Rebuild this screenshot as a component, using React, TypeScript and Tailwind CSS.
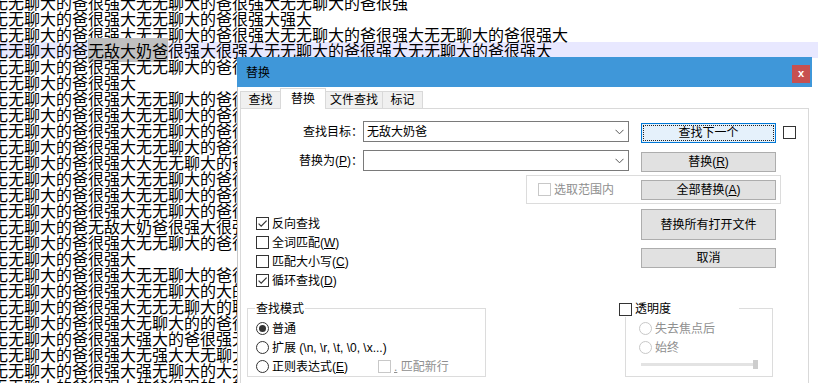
import React from "react";

const TOP_LINES = [
  "无无聊大的爸很强大无无聊大的爸很强大无无聊大的爸很强",
  "无无聊大的爸很强大无无聊大的爸很强大强大",
  "无无聊大的爸很强大无无聊大的爸很强大无无聊大的爸很强大无无聊大的爸很强大",
];

const REST_LINES = [
  "无无聊大的爸很强大无无聊大的爸很强大",
  "无无聊大的爸很强大",
  "无无聊大的爸很强大无无聊大的爸很强大",
  "无无聊大的爸很强大无无聊大的爸很强大",
  "无无聊大的爸很强大无无聊大的爸很强大",
  "无无聊大的爸很强大无无聊大的爸很强大",
  "无无聊大的爸很强大大无无聊大的爸很强大",
  "无无聊大的爸很强大无无聊大的爸很强大",
  "无无聊大的爸很强大无无聊大的爸很强大",
  "无无聊大的爸很强大无无聊大的爸很强大",
  "无无聊大的爸无敌大奶爸很强大很强大",
  "无无聊大的爸很强大无无聊大的爸很强大",
  "无无聊大的爸很强大",
  "无无聊大的爸很强大无无聊大的爸很强大",
  "无无聊大的爸很强大无无聊大的大的爸很强大",
  "无无聊大的爸很强大无无无聊大的聊大的爸很强大",
  "无无聊大的爸很强大无聊大的的爸很强大",
  "无无聊大的爸很强大强大的爸很强无无聊大",
  "无无聊大的爸很强大无强大大无聊大的爸很强大",
  "无无聊大的爸很强大强无聊大的大无无聊大",
  "无无聊大的爸很强大的爸很强的大的爸很强大",
];

function CheckBox({ checked = false, disabled = false }: { checked?: boolean; disabled?: boolean }) {
  return (
    <span
      className={
        disabled
          ? "flex h-[13px] w-[13px] shrink-0 items-center justify-center border border-[#c8c8c8] bg-white"
          : "flex h-[13px] w-[13px] shrink-0 items-center justify-center border border-[#333333] bg-white"
      }
    >
      {checked && (
        <svg width="11" height="11" viewBox="0 0 11 11">
          <path d="M1.6 5.6 L4.2 8.2 L9.6 2.6" fill="none" stroke="#333333" strokeWidth="1.2" />
        </svg>
      )}
    </span>
  );
}

function Radio({ checked = false, disabled = false }: { checked?: boolean; disabled?: boolean }) {
  return (
    <span
      className={
        disabled
          ? "flex h-[13px] w-[13px] shrink-0 items-center justify-center rounded-full border border-[#c8c8c8] bg-white"
          : "flex h-[13px] w-[13px] shrink-0 items-center justify-center rounded-full border border-[#333333] bg-white"
      }
    >
      {checked && <span className="h-[7px] w-[7px] rounded-full bg-[#333333]" />}
    </span>
  );
}

function U({ c }: { c: string }) {
  return <span className="underline underline-offset-[1px]">{c}</span>;
}

function Chevron() {
  return (
    <svg width="9" height="6" viewBox="0 0 9 6" className="shrink-0">
      <path d="M0.5 0.8 L4.5 4.8 L8.5 0.8" fill="none" stroke="#555555" strokeWidth="1" />
    </svg>
  );
}

export default function App() {
  return (
    <div className="relative h-[383px] w-[818px] overflow-hidden bg-white">
      {/* editor text */}
      <div className="-mt-[6px] -ml-[8px] w-[826px] font-['Noto_Sans_CJK_SC',sans-serif] text-[16px] leading-[16px] text-black">
        {TOP_LINES.map((l, i) => (
          <div key={i} className="h-[16px] whitespace-pre">
            {l}
          </div>
        ))}
        <div className="h-[16px] whitespace-pre bg-[#e8e8ff]">
          无无聊大的爸<span className="bg-[#c0c0c0]">无敌大奶爸</span>很强大很强大无无聊大的爸很强大无无聊大的爸很强大
        </div>
        {REST_LINES.map((l, i) => (
          <div key={i} className="h-[16px] whitespace-pre">
            {l}
          </div>
        ))}
      </div>

      {/* replace dialog */}
      <div className="absolute left-[237px] top-[57px] h-[330px] w-[575px] bg-white font-['Liberation_Sans','Noto_Sans_CJK_SC',sans-serif] text-[12px] leading-[16px] text-black">
        {/* title bar */}
        <div className="flex h-[30px] items-start bg-[#3f97d9]">
          <span className="ml-[9px] mt-[8px] text-black">替换</span>
          <div className="ml-auto mr-[2px] mt-[8px] flex h-[18px] w-[18px] items-center justify-center bg-[#c75050] pb-[2px] text-[11px] font-bold leading-none text-white">
            x
          </div>
        </div>

        <div className="h-[300px] border-l border-[#c8c8c8] pt-[1px]">
          {/* tabs */}
          <div className="ml-[2px] flex h-[20px] items-end">
            <div className="flex h-[17px] w-[41px] items-center justify-center border border-b-0 border-[#d9d9d9] bg-[#f0f0f0]">
              查找
            </div>
            <div className="relative z-10 -mb-px -ml-px flex h-[21px] w-[46px] items-center justify-center border border-b-0 border-[#d9d9d9] bg-white">
              替换
            </div>
            <div className="-ml-px flex h-[17px] w-[58px] items-center justify-center border border-b-0 border-[#d9d9d9] bg-[#f0f0f0]">
              文件查找
            </div>
            <div className="-ml-px flex h-[17px] w-[41px] items-center justify-center border border-b-0 border-[#d9d9d9] bg-[#f0f0f0]">
              标记
            </div>
          </div>

          {/* tab panel */}
          <div className="ml-[2px] h-[290px] w-[569px] border border-[#d9d9d9] bg-white">
            {/* row 1 */}
            <div className="mt-[12px] flex h-[21px] items-start">
              <div className="flex h-[21px] w-[122px] items-center justify-end">查找目标：</div>
              <div className="flex h-[21px] w-[266px] items-center justify-between border border-[#7a7a7a] bg-white pl-[3px] pr-[4px]">
                <span>无敌大奶爸</span>
                <Chevron />
              </div>
              <div className="relative ml-[12px] mt-[2px] flex h-[20px] w-[135px] items-center justify-center border border-[#0078d7] bg-[#e5f1fb]">
                <span className="absolute inset-[1px] border border-dotted border-[#222222]" />
                查找下一个
              </div>
              <div className="ml-[7px] mt-[5px]">
                <CheckBox />
              </div>
            </div>

            {/* row 2 */}
            <div className="mt-[8px] flex h-[21px] items-start">
              <div className="flex h-[21px] w-[122px] items-center justify-end">
                替换为(<U c="P" />)：
              </div>
              <div className="flex h-[21px] w-[266px] items-center justify-end border border-[#7a7a7a] bg-white pr-[4px]">
                <Chevron />
              </div>
              <div className="ml-[12px] mt-[2px] flex h-[20px] w-[135px] items-center justify-center border border-[#adadad] bg-[#e1e1e1]">
                替换(<U c="R" />)
              </div>
            </div>

            {/* row 3 */}
            <div className="ml-[285px] mt-[4px] flex h-[29px] w-[255px] items-center border border-[#dcdcdc]">
              <span className="ml-[11px]">
                <CheckBox disabled />
              </span>
              <span className="ml-[3px] text-[#8f8f8f]">选取范围内</span>
              <div className="ml-auto mr-[4px] flex h-[20px] w-[135px] items-center justify-center border border-[#adadad] bg-[#e1e1e1]">
                全部替换(<U c="A" />)
              </div>
            </div>

            {/* row 4 */}
            <div className="mt-[5px] flex items-start">
              <div className="w-[400px] pl-[15px] pt-[5px]">
                <div className="flex h-[19px] items-center gap-[3px]">
                  <CheckBox checked />
                  <span>反向查找</span>
                </div>
                <div className="flex h-[19px] items-center gap-[3px]">
                  <CheckBox />
                  <span>
                    全词匹配(<U c="W" />)
                  </span>
                </div>
                <div className="flex h-[19px] items-center gap-[3px]">
                  <CheckBox />
                  <span>
                    匹配大小写(<U c="C" />)
                  </span>
                </div>
                <div className="flex h-[19px] items-center gap-[3px]">
                  <CheckBox checked />
                  <span>
                    循环查找(<U c="D" />)
                  </span>
                </div>
              </div>
              <div className="flex w-[135px] flex-col">
                <div className="flex h-[31px] items-center justify-center border border-[#adadad] bg-[#e1e1e1]">
                  替换所有打开文件
                </div>
                <div className="mt-[8px] flex h-[20px] items-center justify-center border border-[#adadad] bg-[#e1e1e1]">
                  取消
                </div>
              </div>
            </div>

            {/* row 5 */}
            <div className="mt-[18px] flex items-start">
              <div className="relative ml-[6px] h-[69px] w-[239px] border border-[#dcdcdc] pl-[8px] pt-[10px]">
                <span className="absolute left-[7px] top-[-8px] bg-white px-[1px]">查找模式</span>
                <div className="flex h-[19px] items-center gap-[3px]">
                  <Radio checked />
                  <span>普通</span>
                </div>
                <div className="flex h-[19px] items-center gap-[3px]">
                  <Radio />
                  <span>扩展 (\n, \r, \t, \0, \x...)</span>
                </div>
                <div className="flex h-[19px] items-center">
                  <Radio />
                  <span className="ml-[3px] w-[106px]">
                    正则表达式(<U c="E" />)
                  </span>
                  <CheckBox disabled />
                  <span className="ml-[3px] text-[#8f8f8f]">
                    <U c="." /> 匹配新行
                  </span>
                </div>
              </div>

              <div className="relative ml-[139px] h-[69px] w-[148px] border border-[#dcdcdc] pl-[13px] pt-[10px]">
                <div className="absolute left-[-7px] top-[-8px] flex h-[16px] w-[120px] items-center bg-white">
                  <CheckBox />
                  <span className="ml-[3px]">透明度</span>
                </div>
                <div className="flex h-[19px] items-center gap-[3px]">
                  <Radio disabled />
                  <span className="text-[#8f8f8f]">失去焦点后</span>
                </div>
                <div className="flex h-[19px] items-center gap-[3px]">
                  <Radio disabled />
                  <span className="text-[#8f8f8f]">始终</span>
                </div>
                <div className="relative ml-[2px] mt-[3px] flex h-[9px] w-[117px] items-center">
                  <div className="h-[3px] w-full bg-[#e3e3e3]" />
                  <span className="absolute right-0 top-0 h-[9px] w-[5px] bg-[#cdcdcd]" />
                </div>
              </div>
            </div>
          </div>
        </div>
      </div>
    </div>
  );
}
